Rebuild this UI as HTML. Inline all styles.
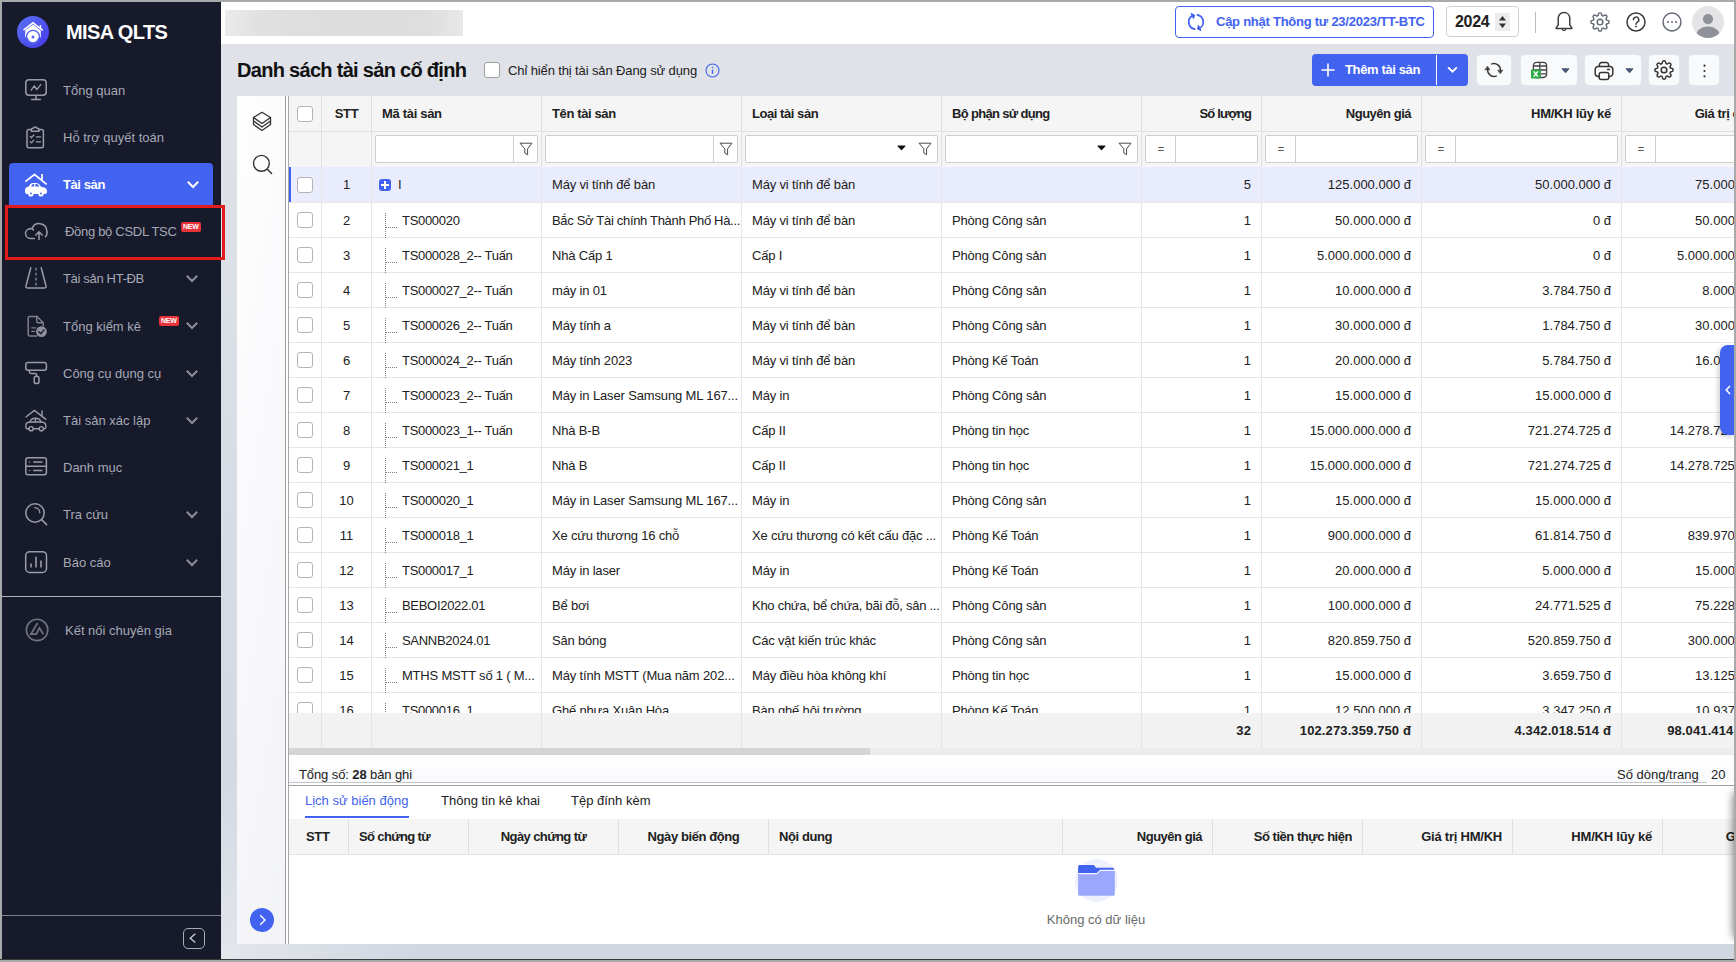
<!DOCTYPE html>
<html lang="vi"><head><meta charset="utf-8"><title>MISA QLTS - Danh sách tài sản cố định</title>
<style>
*{box-sizing:border-box;margin:0;padding:0}
html,body{width:1736px;height:962px;overflow:hidden}
body{font-family:"Liberation Sans",sans-serif;font-size:13px;color:#212121;background:#a9a9a9;position:relative;line-height:1}
.a{position:absolute}
svg{display:block;overflow:visible}
#bg{left:2px;top:2px;width:1732px;height:957px;background:radial-gradient(circle at 225px 100%,#e3e6eb 0,rgba(227,230,235,0) 190px),linear-gradient(to bottom,#e0e2e8 0%,#dfe2e8 10%,#d0d7e1 100%)}
#bline{left:0;top:959px;width:1736px;height:1px;background:#3a3a3a}
/* sidebar */
#side{left:2px;top:2px;width:219px;height:957px;background:#161a2b;overflow:hidden}
#logo{left:17px;top:16px;width:32px;height:32px;border-radius:50%;background:linear-gradient(135deg,#5b74f5,#4338e8)}
#brand{left:66px;top:22px;font-size:20px;font-weight:700;color:#fff;letter-spacing:-.6px;white-space:nowrap}
.mi{left:0;width:219px;height:47px;color:#a6a9b6;font-size:13px;white-space:nowrap}
.mi .ic{position:absolute;left:22px;top:11px;width:24px;height:24px}
.mi .tx{position:absolute;left:61px;top:17px}
.mi .chev{position:absolute;left:184px;top:18px;width:12px;height:12px}
.mi.act{left:9px;width:204px;top:163px;height:42px;background:#4262f0;border-radius:4px 4px 0 0;color:#fff;font-weight:700}
.new{position:absolute;background:#e8333a;color:#fff;font-size:7px;font-weight:700;border-radius:2px;height:10px;line-height:10px;padding:0 2px;letter-spacing:-.2px}
#redbox{left:5px;top:205px;width:220px;height:55px;border:3px solid #e41b1b}
#sideline{left:2px;top:596px;width:219px;height:1px;background:#b2b4bc}
#sideline2{left:2px;top:915px;width:219px;height:1px;background:#7e808a}
#collapse{left:183px;top:927.500px;width:21.500px;height:21.500px;border:1.700px solid #a9abb3;border-radius:5px}
/* topbar */
#top{left:221px;top:2px;width:1513px;height:42px;background:#fff}
#blur{left:225px;top:10px;width:238px;height:26px;background:linear-gradient(90deg,#ebebeb 0,#e1e0e0 15%,#dcdcdc 55%,#dedede 85%,#e8e8e8 100%)}
#upd{left:1175px;top:6px;width:259px;height:32px;border:1px solid #4262f0;border-radius:4px;color:#4262f0;font-weight:700;white-space:nowrap}
#upd span{position:absolute;left:40px;top:8px;letter-spacing:-.25px}
#year{left:1446px;top:6px;width:73px;height:31px;border:1px solid #cfd0d4;border-radius:4px}
#year b{position:absolute;left:8px;top:7px;font-size:16px;letter-spacing:-.3px}
#year i{position:absolute;left:48px;top:6px;width:15px;height:18px;background:#ececec}
#vdiv{left:1535px;top:12px;width:1px;height:21px;background:#bdbdbd}
#avatar{left:1692px;top:6px;width:32px;height:32px;border-radius:50%;background:#e4e4e6;overflow:hidden}
/* page head */
#title{left:237px;top:60px;font-size:20px;font-weight:700;color:#111;white-space:nowrap;letter-spacing:-.7px}
#chk{left:484px;top:62px;width:16px;height:16px;border:1px solid #9e9e9e;border-radius:3px;background:#fff}
#chklbl{left:508px;top:64px;white-space:nowrap;color:#212121;letter-spacing:-.12px}
#btnadd{left:1312px;top:54px;width:156px;height:32px;background:#4262f0;border-radius:4px;color:#fff;font-weight:700;white-space:nowrap}
#btnadd .t{position:absolute;left:33px;top:9px;letter-spacing:-.37px}
#btnadd .d{position:absolute;left:124px;top:1px;width:1px;height:30px;background:#fff}
.tb{top:54px;height:32px;background:#f9fafc;border:1px solid #e3e6ed;border-radius:5px}
/* panel */
#panel{left:237px;top:96px;width:1497px;height:847.500px;background:#fff;overflow:hidden}
#lstrip{left:0;top:0;width:48px;height:848px;background:linear-gradient(100deg,#fdfdfe 10%,#f2f3f7 100%)}
#sp1{left:48px;top:0;width:1px;height:848px;background:#9e9e9e}
#sp2{left:51px;top:0;width:1px;height:848px;background:#a8a8a8}
#grid{left:52px;top:0;width:1445px;height:847px;overflow:hidden}
.hdr{position:absolute;left:0;top:0;width:1500px;height:36px;background:#f5f5f5;border-bottom:1px solid #e0e0e0;font-weight:700}
.flt{position:absolute;left:0;top:36px;width:1500px;height:36px;background:#f5f5f5}
.hc{position:absolute;top:0;height:100%;border-right:1px solid #e0e0e0;padding:11px 10px 0 10px;white-space:nowrap;letter-spacing:-.3px}
.hc.r{text-align:right;padding:11px 10px 0 0}
.hc.ctr{text-align:center;padding:11px 0 0 0}
.fi{position:absolute;top:3px;height:28px;background:#fff;border:1px solid #cecece;border-radius:2px}
.fi .sep{position:absolute;top:0;width:1px;height:26px;background:#cecece}
.fi .eq{position:absolute;left:0;top:0;width:30px;height:26px;line-height:27px;text-align:center;font-size:11px;color:#555}
.cb{display:block;width:16px;height:16px;border:1px solid #b4b4b4;border-radius:3px;background:#fff}
.rows{position:absolute;left:0;top:71px;width:1500px;height:546px;overflow:hidden}
.row{position:relative;height:35px;border-bottom:1px solid #e6e6e6;background:#fff}
.row.sel{background:#e9ecfd;height:36px}
.row.sel .c{top:1px;line-height:34px}
.row.sel:before{content:"";position:absolute;left:0;top:0;width:2px;height:35px;background:#4262f0;z-index:2}
.c{position:absolute;top:0;height:35px;border-right:1px solid #e6e6e6;line-height:36px;white-space:nowrap;overflow:hidden;padding:0 1px 0 10px}
.c.r{text-align:right;padding:0 10px 0 0}
.c0{left:0;width:33px;padding:9px 0 0 8px}
.c1{left:33px;width:50px;text-align:center;padding:0}
.c2{left:83px;width:170px;padding:0}
.c3{left:253px;width:200px}
.c4{left:453px;width:200px}
.c5{left:653px;width:200px}
.c6{left:853px;width:120px}
.c7{left:973px;width:160px}
.c8{left:1133px;width:200px}
.c9{left:1333px;width:160px}
.el{display:block;overflow:hidden;white-space:nowrap;letter-spacing:-.18px}
.plus{position:absolute;left:7px;top:11px;width:12px;height:12px;border-radius:3px;background:#4262f0}
.plus:before{content:"";position:absolute;left:2px;top:5.350px;width:8px;height:1.300px;background:#fff}
.plus:after{content:"";position:absolute;left:5.350px;top:2px;width:1.300px;height:8px;background:#fff}
.t1{position:absolute;left:26px;top:0}
.t2{position:absolute;left:30px;top:0;width:139px;overflow:hidden;letter-spacing:-.3px}
.tv{position:absolute;left:13px;top:10px;width:0;height:25px;border-left:1px dotted #7d7d7d}
.th{position:absolute;left:14px;top:24px;width:11px;height:0;border-top:1px dotted #7d7d7d}
.foot{position:absolute;left:0;top:617px;width:1500px;height:35px;background:#f2f2f2;font-weight:700;letter-spacing:.12px}
.foot .c{border-right:1px solid #e3e3e3;line-height:35px}
.sb{position:absolute;left:0;top:652px;width:1500px;height:7px;background:#ececec}
.sb i{position:absolute;left:0;top:0;width:581px;height:7px;background:#d5d5d5}
.pg{position:absolute;left:0;top:659px;width:1445px;height:27px;background:linear-gradient(#fff,#f8f9fc)}
#hs1{left:0;top:686px;width:1418px;height:1px;background:#c4c4c4}
#hs2{left:0;top:689px;width:1445px;height:1px;background:#9d9d9d}
.tab{position:absolute;top:698px;white-space:nowrap;font-size:13px}
.dh{position:absolute;left:0;top:723px;width:1500px;height:36px;background:#f5f5f5;border-bottom:1px solid #e4e4e4;font-weight:700}
#tabR{left:1720px;top:345px;width:16px;height:90px;background:#4262f0;border-radius:8px 0 0 8px;box-shadow:-2px 2px 5px rgba(0,0,0,.18)}
#rborder{left:1734px;top:0;width:2px;height:962px;background:#a9a9a9}
#rshadow{left:1735px;top:792px;width:12px;height:146px;border-radius:6px;box-shadow:0 0 9px 2px rgba(0,0,0,.5)}

</style></head>
<body>
<div class="a" id="bg"></div>
<div class="a" id="bline"></div>
<div class="a" id="side"></div>
<div class="a" id="logo"><svg width="32" height="32" viewBox="0 0 32 32"><path d="M6.5 14.2 16 6.8l9.8 7.6" fill="none" stroke="#fff" stroke-width="1.5"/><path d="M22.6 9.2h1.6v3.2l-1.6-1.2z" fill="#fff"/><path d="M8.2 14.4 16 8.6l7.8 5.8v6.8l-2 1.2a6 6 0 0 0-11.6 0l-2-1.2z" fill="#fff"/><circle cx="16" cy="21" r="5.2" fill="#fff"/><circle cx="16" cy="21" r="6.6" fill="none" stroke="#5261ee" stroke-width="1.3"/><path d="M16 19.2l1.8 1.8-1.8 1.8-1.8-1.8z" fill="#5160ee"/></svg></div>
<div class="a" id="brand">MISA QLTS</div>

<div class="a mi" style="left:2px;top:67px"><svg class="ic" viewBox="0 0 24 24" fill="none" stroke="#9a9ca7" stroke-width="1.5" stroke-linecap="round" stroke-linejoin="round"><rect x="1.8" y="1.8" width="20.4" height="15.4" rx="3.2"/><path d="M12 17.4v4M7.6 21.6h8.8"/><path d="M7.2 12.2l3.2-4.4 2.4 3.8 4-5" stroke-width="1.3"/></svg><span class="tx">Tổng quan</span></div>

<div class="a mi" style="left:2px;top:114px"><svg class="ic" viewBox="0 0 24 24" fill="none" stroke="#9a9ca7" stroke-width="1.500" stroke-linecap="round" stroke-linejoin="round"><path d="M7.400 4.400H5a2 2 0 0 0-2 2v14.400a2 2 0 0 0 2 2h12.400a2 2 0 0 0 2-2V6.400a2 2 0 0 0-2-2H15"/><path d="M7.400 6.200V4.600a1.400 1.400 0 0 1 1.400-1.400h.6a1.900 1.900 0 0 1 3.600 0h.6a1.400 1.400 0 0 1 1.400 1.400v1.600z"/><path d="M6.200 11.400l1.300 1.300 2.300-2.700M6.200 16.600l1.300 1.300 2.300-2.700M12.400 11.800h4.200M12.400 16.800h4.200" stroke-width="1.300"/></svg><span class="tx">Hỗ trợ quyết toán</span></div>

<div class="a mi act"><svg class="ic" style="left:15px;top:9px" viewBox="0 0 24 24" fill="none" stroke="#fff" stroke-width="1.700" stroke-linejoin="round"><path d="M1.300 9.700 10.500 2.500 22.700 12.400"/><path d="M18 2v6.600"/><path d="M1 18.200C1 16.200 2.400 15 4.600 14.800L5.800 12.800C6.800 11.200 8 10.900 10.400 10.900H11.400C14 10.900 15.400 11.800 16.600 14L17 14.800C20.400 15 23 16.400 23 19V20C23 21.200 22.200 22 21 22H19.600A2.600 2.600 0 0 1 14.400 22H9.500A2.600 2.600 0 0 1 4.300 22H3C1.800 22 1 21.200 1 20Z" fill="#fff" stroke="none"/><path d="M7 14.500 8 12.900C8.400 12.300 9 12.100 10.200 12.100V14.500ZM11.400 12.100C13.400 12.100 14.400 12.700 15.400 14.500H11.400Z" fill="#4262f0" stroke="none"/><circle cx="6.900" cy="21.500" r=".9" fill="#4262f0" stroke="none"/><circle cx="17" cy="21.500" r=".9" fill="#4262f0" stroke="none"/></svg><span class="tx" style="left:54px;top:15px;letter-spacing:-.4px">Tài sản</span><svg class="chev" style="left:178px;top:16px" viewBox="0 0 12 12" fill="none" stroke="#fff" stroke-width="2"><path d="M.8 2.800 6 8 11.200 2.800"/></svg></div>

<div class="a mi" style="left:2px;top:208px"><svg class="ic" viewBox="0 0 24 24" fill="none" stroke="#9a9ca7" stroke-width="1.500" stroke-linecap="round" stroke-linejoin="round"><path d="M10.400 19.400H6.400a4.900 4.900 0 0 1-.6-9.760 1 1 0 0 0 .5.100"/><path d="M8.200 9.400A7.600 7.600 0 0 1 22.800 11.400a7 7 0 0 1-1.400 6.400"/><path d="M5.800 9.640c1.500-.3 2.800.2 3.600 1.300"/><path d="M15 20.600v-7.400M11.800 16l3.200-3.200 3.200 3.200"/></svg><span class="tx" style="left:63px;letter-spacing:-.3px">Đồng bộ CSDL TSC</span><span class="new" style="left:179px;top:14px">NEW</span></div>

<div class="a mi" style="left:2px;top:255px"><svg class="ic" viewBox="0 0 24 24" fill="none" stroke="#9a9ca7" stroke-width="1.500" stroke-linecap="round" stroke-linejoin="round"><path d="M6.800 1.800 1.900 20.200a1.300 1.300 0 0 0 1.300 1.700h17.600a1.300 1.300 0 0 0 1.300-1.700L17.200 1.800"/><path d="M12 1.800v18" stroke-dasharray="2.600 2.400" stroke-linecap="butt" stroke-width="1.200"/></svg><span class="tx" style="letter-spacing:-.33px">Tài sản HT-ĐB</span><svg class="chev" viewBox="0 0 12 12" fill="none" stroke="#8b8d98" stroke-width="2"><path d="M.8 2.800 6 8 11.200 2.800"/></svg></div>

<div class="a mi" style="left:2px;top:303px"><svg class="ic" viewBox="0 0 24 24" fill="none" stroke="#7f818c" stroke-width="1.500" stroke-linecap="round" stroke-linejoin="round"><path d="M12.600 22H5.600a1.400 1.400 0 0 1-1.400-1.400V3.800A1.400 1.400 0 0 1 5.600 2.400h7.400l6.200 6.400v3"/><path d="M12.800 2.600v4.800a1.400 1.400 0 0 0 1.400 1.400h4.800"/><path d="M7.800 13.800h4M7.800 17.400h2.800" stroke-width="1.300"/><circle cx="17.400" cy="17.600" r="5.400" fill="#8e909b" stroke="none"/><path d="M14.800 17.800l1.900 1.900 3.400-3.800" stroke="#161a2b" stroke-width="1.400"/></svg><span class="tx">Tổng kiểm kê</span><span class="new" style="left:157px;top:13px">NEW</span><svg class="chev" style="top:17px" viewBox="0 0 12 12" fill="none" stroke="#8b8d98" stroke-width="2"><path d="M.8 2.800 6 8 11.200 2.800"/></svg></div>

<div class="a mi" style="left:2px;top:350px"><svg class="ic" viewBox="0 0 24 24" fill="none" stroke="#9a9ca7" stroke-width="1.500" stroke-linecap="round" stroke-linejoin="round"><rect x="1.800" y="1.600" width="20.600" height="7.600" rx="2.200"/><path d="M5.400 9.400v1.600a1.400 1.400 0 0 0 1.400 1.400h4.400a1.400 1.400 0 0 1 1.400 1.400v1.400"/><rect x="10.200" y="15.200" width="4.800" height="7.400" rx="2.200"/></svg><span class="tx">Công cụ dụng cụ</span><svg class="chev" viewBox="0 0 12 12" fill="none" stroke="#8b8d98" stroke-width="2"><path d="M.8 2.800 6 8 11.200 2.800"/></svg></div>

<div class="a mi" style="left:2px;top:397px"><svg class="ic" viewBox="0 0 24 24" fill="none" stroke="#9a9ca7" stroke-width="1.400" stroke-linecap="round" stroke-linejoin="round"><path d="M1.600 9.200 10.400 2.400 22.200 11.600" stroke-linecap="butt"/><path d="M18 2.400v5.800" stroke-linecap="butt"/><path d="M5.900 14c.8-2.600 2.600-3.800 5.500-3.800s4.800 1.200 5.900 3.800c2.700.2 4.500 1.300 4.500 3.600v2c0 .7-.4 1.100-1.100 1.100h-1.100M5.900 14c-2.300.2-4 1.200-4 3.200v2.400c0 .7.400 1.100 1.100 1.100h1.800M9.400 20.700h5.600"/><path d="M5.900 14h11.400M11.400 10.400V14"/><circle cx="7.100" cy="20.700" r="2.100"/><circle cx="17.300" cy="20.700" r="2.100"/></svg><span class="tx">Tài sản xác lập</span><svg class="chev" viewBox="0 0 12 12" fill="none" stroke="#8b8d98" stroke-width="2"><path d="M.8 2.800 6 8 11.200 2.800"/></svg></div>

<div class="a mi" style="left:2px;top:444px"><svg class="ic" viewBox="0 0 24 24" fill="none" stroke="#9a9ca7" stroke-width="1.500" stroke-linecap="round" stroke-linejoin="round"><rect x="1.800" y="2.800" width="20.600" height="17" rx="2.200"/><path d="M1.800 11.300h20.600"/><path d="M9.200 7.100h9.200M9.200 15.500h9.200M5.600 6.600v1M5.600 15v1" stroke-linecap="butt"/></svg><span class="tx">Danh mục</span></div>

<div class="a mi" style="left:2px;top:491px"><svg class="ic" viewBox="0 0 24 24" fill="none" stroke="#9a9ca7" stroke-width="1.500" stroke-linecap="round" stroke-linejoin="round"><circle cx="11" cy="11" r="9.200"/><path d="M17.600 17.600l5 5"/><path d="M10.800 5.600a5.400 5.400 0 0 1 5 5.200" stroke-width="1.300"/></svg><span class="tx">Tra cứu</span><svg class="chev" viewBox="0 0 12 12" fill="none" stroke="#8b8d98" stroke-width="2"><path d="M.8 2.800 6 8 11.200 2.800"/></svg></div>

<div class="a mi" style="left:2px;top:539px"><svg class="ic" viewBox="0 0 24 24" fill="none" stroke="#9a9ca7" stroke-width="1.500" stroke-linecap="round" stroke-linejoin="round"><rect x="1.700" y="1.700" width="20.800" height="20.800" rx="4"/><path d="M7 13.600v4M12 6.800v10.800M17 10.400v7.200" stroke-linecap="butt" stroke-width="1.600"/></svg><span class="tx">Báo cáo</span><svg class="chev" viewBox="0 0 12 12" fill="none" stroke="#8b8d98" stroke-width="2"><path d="M.8 2.800 6 8 11.200 2.800"/></svg></div>

<div class="a" id="sideline"></div>
<div class="a mi" style="left:2px;top:607px"><svg class="ic" style="left:23px" viewBox="0 0 24 24" fill="none" stroke="#71737f" stroke-width="1.600" stroke-linejoin="miter"><circle cx="12.100" cy="11.900" r="10.700"/><path d="M12.600 5 5.900 16.100H11.300L14.500 9.900 18.300 16.200" stroke-width="1.700"/></svg><span class="tx" style="left:63px">Kết nối chuyên gia</span></div>

<div class="a" id="sideline2"></div>
<div class="a" id="collapse"><svg width="18" height="18" viewBox="0 0 18 18" fill="none" stroke="#d0d1d6" stroke-width="1.300"><path d="M11.300 4.800 6.200 9.200l5.100 4.400"/></svg></div>
<div class="a" id="redbox"></div>
<div class="a" id="top"></div>
<div class="a" id="blur"></div>
<div class="a" id="upd"><svg class="a" style="left:11px;top:6px" width="18" height="18" viewBox="0 0 18 18" fill="none" stroke="#4262f0" stroke-width="1.700" stroke-linecap="round" stroke-linejoin="round"><path d="M7.730 16.190A7.300 7.300 0 0 1 5.400 2.700"/><path d="M10.270 1.810A7.300 7.300 0 0 1 12.600 15.300"/><path d="M4.400.600 7.600 2.100 6.600 5.400z" fill="#4262f0" stroke-width="1"/><path d="M11.400 12.600 10.400 15.900 13.600 17.400z" fill="#4262f0" stroke-width="1"/></svg><span>Cập nhật Thông tư 23/2023/TT-BTC</span></div>
<div class="a" id="year"><b>2024</b><i></i><svg class="a" style="left:51px;top:8px" width="9" height="14" viewBox="0 0 9 14"><path d="M4.500 1 8 5.400H1zM4.500 13 8 8.600H1z" fill="#333"/></svg></div>
<div class="a" id="vdiv"></div>
<svg class="a" style="left:1554px;top:11px" width="20" height="22" viewBox="0 0 20 22" fill="none" stroke="#3c3c3c" stroke-width="1.500" stroke-linecap="round" stroke-linejoin="round"><path d="M10 1.600c3.400 0 5.800 2.600 5.800 6v6.200l2 3v.8H2.200v-.8l2-3V7.600c0-3.400 2.400-6 5.800-6z"/><path d="M8.400 18.400a1.700 1.700 0 0 0 3.200 0" stroke-width="1.300"/></svg>
<svg class="a" style="left:1590px;top:12px" width="20" height="20" viewBox="0 0 24 24" fill="none" stroke="#606774" stroke-width="1.700" stroke-linecap="round" stroke-linejoin="round"><circle cx="12" cy="12" r="3.400"/><path d="M19.400 15a1.650 1.650 0 0 0 .33 1.820l.06.060a2 2 0 1 1-2.830 2.830l-.06-.060a1.650 1.650 0 0 0-1.820-.33 1.650 1.650 0 0 0-1 1.510V21a2 2 0 0 1-4 0v-.09A1.650 1.650 0 0 0 9 19.400a1.650 1.650 0 0 0-1.820.33l-.06.060a2 2 0 1 1-2.830-2.830l.06-.060a1.650 1.650 0 0 0 .33-1.820 1.650 1.650 0 0 0-1.510-1H3a2 2 0 0 1 0-4h.09A1.650 1.650 0 0 0 4.600 9a1.650 1.650 0 0 0-.33-1.820l-.06-.060a2 2 0 1 1 2.830-2.830l.06.060a1.650 1.650 0 0 0 1.820.33H9a1.650 1.650 0 0 0 1-1.510V3a2 2 0 0 1 4 0v.09a1.650 1.650 0 0 0 1 1.510 1.650 1.650 0 0 0 1.820-.33l.06-.060a2 2 0 1 1 2.830 2.830l-.06.060a1.650 1.650 0 0 0-.33 1.820V9a1.650 1.650 0 0 0 1.510 1H21a2 2 0 0 1 0 4h-.09a1.650 1.650 0 0 0-1.510 1z"/></svg>
<svg class="a" style="left:1626px;top:12px" width="20" height="20" viewBox="0 0 20 20" fill="none" stroke="#3c3c3c" stroke-width="1.500" stroke-linecap="round" stroke-linejoin="round"><circle cx="10" cy="10" r="9"/><path d="M7.400 7.800a2.700 2.700 0 1 1 4 2.400c-.9.500-1.400 1-1.400 2"/><circle cx="10" cy="14.600" r=".7" fill="#3c3c3c" stroke-width=".6"/></svg>
<svg class="a" style="left:1662px;top:12px" width="20" height="20" viewBox="0 0 20 20" fill="none" stroke="#606774" stroke-width="1.400"><circle cx="10" cy="10" r="9"/><g fill="#606774" stroke="none"><circle cx="6" cy="10" r="1"/><circle cx="10" cy="10" r="1"/><circle cx="14" cy="10" r="1"/></g></svg>
<div class="a" id="avatar"><svg width="32" height="32" viewBox="0 0 32 32"><circle cx="16" cy="13.100" r="5.100" fill="#8f9199"/><ellipse cx="16" cy="28.600" rx="11.400" ry="8" fill="#8f9199"/></svg></div>

<div class="a" id="title">Danh sách tài sản cố định</div>
<div class="a" id="chk"></div>
<div class="a" id="chklbl">Chỉ hiển thị tài sản Đang sử dụng</div>
<svg class="a" style="left:705px;top:63px" width="15" height="15" viewBox="0 0 15 15" fill="none" stroke="#4262f0" stroke-width="1.100"><circle cx="7.500" cy="7.500" r="6.500"/><path d="M7.500 6.600v4.200" stroke-width="1.300"/><circle cx="7.500" cy="4.500" r=".8" fill="#4262f0" stroke="none"/></svg>

<div class="a" id="btnadd"><svg class="a" style="left:9px;top:9px" width="14" height="14" viewBox="0 0 14 14" stroke="#fff" stroke-width="1.600"><path d="M7 .4v13.200M.4 7h13.200"/></svg><span class="t">Thêm tài sản</span><span class="d"></span><svg class="a" style="left:135px;top:12px" width="11" height="8" viewBox="0 0 11 8" fill="none" stroke="#fff" stroke-width="2"><path d="M1.200 1.400 5.500 5.600 9.800 1.400"/></svg></div>

<div class="a tb" style="left:1476px;width:36px"><svg class="a" style="left:7px;top:5px" width="20" height="20" viewBox="0 0 20 20" fill="none" stroke="#3a3a3a" stroke-width="1.500" stroke-linecap="round"><path d="M7.780 3.890A6.500 6.500 0 0 1 16.400 10.600"/><path d="M3.600 9.400A6.500 6.500 0 0 0 12.220 16.110"/><path d="M14 10.200h4.800l-2.400 3.400z" fill="#3a3a3a" stroke-width=".6" stroke-linejoin="round"/><path d="M1.200 9.800H6L3.600 6.400z" fill="#3a3a3a" stroke-width=".6" stroke-linejoin="round"/></svg></div>
<div class="a tb" style="left:1520px;width:58px"><svg class="a" style="left:9px;top:6px" width="18" height="18" viewBox="0 0 18 18" fill="none" stroke="#444" stroke-width="1.300"><rect x="3.400" y="1.300" width="13.200" height="15.200" rx="3.400"/><path d="M3.400 5h13.200M3.400 9h13.200M3.400 12.800h13.200M9.800 1.300v15.200"/><rect x="1" y="8.600" width="9.600" height="8.800" rx=".6" fill="#2caa45" stroke="none"/><path d="M3.700 10.400l4.200 5.200M7.900 10.400 3.700 15.600" stroke="#fff" stroke-width="1.500"/></svg><svg class="a" style="left:40px;top:13px" width="9" height="6" viewBox="0 0 9 6"><path d="M1 .800h7L4.500 4.800z" fill="#4b5578" stroke="#4b5578" stroke-width="1" stroke-linejoin="round"/></svg></div>
<div class="a tb" style="left:1584px;width:58px"><svg class="a" style="left:9px;top:6px" width="20" height="20" viewBox="0 0 20 20" fill="none" stroke="#333" stroke-width="1.500" stroke-linejoin="round"><path d="M5.400 5.400V3.800a2.200 2.200 0 0 1 2.200-2.200h4.800a2.200 2.200 0 0 1 2.200 2.200v1.600"/><path d="M5.200 15.400H4A2.800 2.800 0 0 1 1.200 12.600V8.200A2.800 2.800 0 0 1 4 5.400h12a2.800 2.800 0 0 1 2.800 2.800v4.400a2.800 2.800 0 0 1-2.800 2.800h-1.200"/><rect x="5.200" y="11.400" width="9.600" height="7.200" rx="2"/><path d="M13.600 8.600h1.800" stroke-linecap="round"/></svg><svg class="a" style="left:40px;top:13px" width="9" height="6" viewBox="0 0 9 6"><path d="M1 .800h7L4.500 4.800z" fill="#4b5578" stroke="#4b5578" stroke-width="1" stroke-linejoin="round"/></svg></div>
<div class="a tb" style="left:1648px;width:32px"><svg class="a" style="left:5px;top:5px" width="20" height="20" viewBox="0 0 24 24" fill="none" stroke="#333" stroke-width="1.800" stroke-linecap="round" stroke-linejoin="round"><circle cx="12" cy="12" r="3.400"/><path d="M19.400 15a1.650 1.650 0 0 0 .33 1.820l.06.060a2 2 0 1 1-2.830 2.830l-.06-.060a1.650 1.650 0 0 0-1.820-.33 1.650 1.650 0 0 0-1 1.510V21a2 2 0 0 1-4 0v-.09A1.650 1.650 0 0 0 9 19.400a1.650 1.650 0 0 0-1.820.33l-.06.060a2 2 0 1 1-2.830-2.830l.06-.060a1.650 1.650 0 0 0 .33-1.820 1.650 1.650 0 0 0-1.510-1H3a2 2 0 0 1 0-4h.09A1.650 1.650 0 0 0 4.600 9a1.650 1.650 0 0 0-.33-1.820l-.06-.060a2 2 0 1 1 2.830-2.830l.06.060a1.650 1.650 0 0 0 1.820.33H9a1.650 1.650 0 0 0 1-1.510V3a2 2 0 0 1 4 0v.09a1.650 1.650 0 0 0 1 1.510 1.650 1.650 0 0 0 1.820-.33l.06-.060a2 2 0 1 1 2.830 2.830l-.06.060a1.650 1.650 0 0 0-.33 1.820V9a1.650 1.650 0 0 0 1.510 1H21a2 2 0 0 1 0 4h-.09a1.650 1.650 0 0 0-1.510 1z"/></svg></div>
<div class="a tb" style="left:1688px;width:32px"><svg class="a" style="left:14px;top:9px" width="3" height="14" viewBox="0 0 3 14" fill="#333"><circle cx="1.500" cy="1.700" r="1.100"/><circle cx="1.500" cy="7" r="1.100"/><circle cx="1.500" cy="12.300" r="1.100"/></svg></div>
<div class="a" id="panel">
<div class="a" id="lstrip"></div>
<svg class="a" style="left:15px;top:15px" width="20" height="21" viewBox="0 0 20 21" fill="none" stroke="#333" stroke-width="1.300" stroke-linejoin="round" stroke-linecap="round"><path d="M10 1.300 18.500 6.500 10 12.500 1.500 6.500z"/><path d="M1.500 6.500V10L10 16 18.500 10V6.500"/><path d="M1.500 10V13.500L10 19.500 18.500 13.500V10"/></svg>
<svg class="a" style="left:15px;top:58px" width="21" height="21" viewBox="0 0 21 21" fill="none" stroke="#333" stroke-width="1.400" stroke-linecap="round"><circle cx="9.400" cy="9.300" r="7.900"/><path d="M15.300 15.300 19.600 19.600"/></svg>
<div class="a" id="sp1"></div><div class="a" id="sp2"></div>
<div class="a" style="left:13px;top:812px;width:24px;height:24px;border-radius:50%;background:#4262f0"><svg class="a" style="left:8px;top:6px" width="9" height="12" viewBox="0 0 9 12" fill="none" stroke="#fff" stroke-width="1.400"><path d="M2.200 1.200 7 6 2.200 10.800"/></svg></div>
<div class="a" id="grid">
<div class="hdr">
<div class="hc" style="left:0;width:33px;padding:10px 0 0 8px"><span class="cb"></span></div>
<div class="hc ctr" style="left:33px;width:50px;letter-spacing:-0.39px">STT</div>
<div class="hc" style="left:83px;width:170px;letter-spacing:-0.31px">Mã tài sản</div>
<div class="hc" style="left:253px;width:200px;letter-spacing:-0.375px">Tên tài sản</div>
<div class="hc" style="left:453px;width:200px;letter-spacing:-0.444px">Loại tài sản</div>
<div class="hc" style="left:653px;width:200px;letter-spacing:-0.668px">Bộ phận sử dụng</div>
<div class="hc r" style="left:853px;width:120px;letter-spacing:-0.859px">Số lượng</div>
<div class="hc r" style="left:973px;width:160px;letter-spacing:-0.488px">Nguyên giá</div>
<div class="hc r" style="left:1133px;width:200px;letter-spacing:-0.257px">HM/KH lũy kế</div>
<div class="hc r" style="left:1333px;width:160px;letter-spacing:-0.4px">Giá trị còn lại</div>
</div>
<div class="flt">
<div class="hc" style="left:0;width:33px"></div>
<div class="hc" style="left:33px;width:50px"></div>
<div class="hc" style="left:83px;width:170px"></div>
<div class="hc" style="left:253px;width:200px"></div>
<div class="hc" style="left:453px;width:200px"></div>
<div class="hc" style="left:653px;width:200px"></div>
<div class="hc" style="left:853px;width:120px"></div>
<div class="hc" style="left:973px;width:160px"></div>
<div class="hc" style="left:1133px;width:200px"></div>
<div class="hc" style="left:1333px;width:160px"></div>
<div class="fi" style="left:86px;width:163px"><span class="sep" style="left:137px"></span><svg class="a" style="left:143px;top:6px" width="14" height="14" viewBox="0 0 14 14" fill="none" stroke="#4a4a4a" stroke-width="1" stroke-linejoin="round"><path d="M1 1.200h12L8.600 6.800v6L5.800 11V6.800z"/></svg></div>
<div class="fi" style="left:256px;width:193px"><span class="sep" style="left:167px"></span><svg class="a" style="left:173px;top:6px" width="14" height="14" viewBox="0 0 14 14" fill="none" stroke="#4a4a4a" stroke-width="1" stroke-linejoin="round"><path d="M1 1.200h12L8.600 6.800v6L5.800 11V6.800z"/></svg></div>
<div class="fi" style="left:456px;width:193px"><svg class="a" style="left:151px;top:9px" width="9" height="6" viewBox="0 0 9 6"><path d="M1.200 1h6.600L4.500 4.600z" fill="#111" stroke="#111" stroke-width="1.200" stroke-linejoin="round"/></svg><svg class="a" style="left:171.500px;top:6px" width="14" height="14" viewBox="0 0 14 14" fill="none" stroke="#4a4a4a" stroke-width="1" stroke-linejoin="round"><path d="M1 1.200h12L8.600 6.800v6L5.800 11V6.800z"/></svg></div>
<div class="fi" style="left:656px;width:193px"><svg class="a" style="left:151px;top:9px" width="9" height="6" viewBox="0 0 9 6"><path d="M1.200 1h6.600L4.500 4.600z" fill="#111" stroke="#111" stroke-width="1.200" stroke-linejoin="round"/></svg><svg class="a" style="left:171.500px;top:6px" width="14" height="14" viewBox="0 0 14 14" fill="none" stroke="#4a4a4a" stroke-width="1" stroke-linejoin="round"><path d="M1 1.200h12L8.600 6.800v6L5.800 11V6.800z"/></svg></div>
<div class="fi" style="left:856px;width:113px"><span class="eq">=</span><span class="sep" style="left:29px"></span></div>
<div class="fi" style="left:976px;width:153px"><span class="eq">=</span><span class="sep" style="left:29px"></span></div>
<div class="fi" style="left:1136px;width:193px"><span class="eq">=</span><span class="sep" style="left:29px"></span></div>
<div class="fi" style="left:1336px;width:153px"><span class="eq">=</span><span class="sep" style="left:29px"></span></div>
</div>
<div class="rows">
<div class="row sel"><div class="c c0"><span class="cb"></span></div><div class="c c1">1</div><div class="c c2"><span class="plus"></span><span class="t1">I</span></div><div class="c c3"><span class="el">Máy vi tính để bàn</span></div><div class="c c4"><span class="el">Máy vi tính để bàn</span></div><div class="c c5"><span class="el"></span></div><div class="c c6 r">5</div><div class="c c7 r">125.000.000 đ</div><div class="c c8 r">50.000.000 đ</div><div class="c c9 r">75.000.000 đ</div></div>
<div class="row"><div class="c c0"><span class="cb"></span></div><div class="c c1">2</div><div class="c c2"><span class="tv"></span><span class="th"></span><span class="t2">TS000020</span></div><div class="c c3"><span class="el" style="letter-spacing:-0.316px">Bắc Sở Tài chính Thành Phố Hà...</span></div><div class="c c4"><span class="el">Máy vi tính để bàn</span></div><div class="c c5"><span class="el">Phòng Công sản</span></div><div class="c c6 r">1</div><div class="c c7 r">50.000.000 đ</div><div class="c c8 r">0 đ</div><div class="c c9 r">50.000.000 đ</div></div>
<div class="row"><div class="c c0"><span class="cb"></span></div><div class="c c1">3</div><div class="c c2"><span class="tv"></span><span class="th"></span><span class="t2">TS000028_2-- Tuấn</span></div><div class="c c3"><span class="el">Nhà Cấp 1</span></div><div class="c c4"><span class="el">Cấp I</span></div><div class="c c5"><span class="el">Phòng Công sản</span></div><div class="c c6 r">1</div><div class="c c7 r">5.000.000.000 đ</div><div class="c c8 r">0 đ</div><div class="c c9 r">5.000.000.000 đ</div></div>
<div class="row"><div class="c c0"><span class="cb"></span></div><div class="c c1">4</div><div class="c c2"><span class="tv"></span><span class="th"></span><span class="t2">TS000027_2-- Tuấn</span></div><div class="c c3"><span class="el">máy in 01</span></div><div class="c c4"><span class="el">Máy vi tính để bàn</span></div><div class="c c5"><span class="el">Phòng Công sản</span></div><div class="c c6 r">1</div><div class="c c7 r">10.000.000 đ</div><div class="c c8 r">3.784.750 đ</div><div class="c c9 r">8.000.000 đ</div></div>
<div class="row"><div class="c c0"><span class="cb"></span></div><div class="c c1">5</div><div class="c c2"><span class="tv"></span><span class="th"></span><span class="t2">TS000026_2-- Tuấn</span></div><div class="c c3"><span class="el">Máy tính a</span></div><div class="c c4"><span class="el">Máy vi tính để bàn</span></div><div class="c c5"><span class="el">Phòng Công sản</span></div><div class="c c6 r">1</div><div class="c c7 r">30.000.000 đ</div><div class="c c8 r">1.784.750 đ</div><div class="c c9 r">30.000.000 đ</div></div>
<div class="row"><div class="c c0"><span class="cb"></span></div><div class="c c1">6</div><div class="c c2"><span class="tv"></span><span class="th"></span><span class="t2">TS000024_2-- Tuấn</span></div><div class="c c3"><span class="el">Máy tính 2023</span></div><div class="c c4"><span class="el">Máy vi tính để bàn</span></div><div class="c c5"><span class="el">Phòng Kế Toán</span></div><div class="c c6 r">1</div><div class="c c7 r">20.000.000 đ</div><div class="c c8 r">5.784.750 đ</div><div class="c c9 r">16.000.000 đ</div></div>
<div class="row"><div class="c c0"><span class="cb"></span></div><div class="c c1">7</div><div class="c c2"><span class="tv"></span><span class="th"></span><span class="t2">TS000023_2-- Tuấn</span></div><div class="c c3"><span class="el" style="letter-spacing:-0.143px">Máy in Laser Samsung ML 167...</span></div><div class="c c4"><span class="el">Máy in</span></div><div class="c c5"><span class="el">Phòng Công sản</span></div><div class="c c6 r">1</div><div class="c c7 r">15.000.000 đ</div><div class="c c8 r">15.000.000 đ</div><div class="c c9 r"></div></div>
<div class="row"><div class="c c0"><span class="cb"></span></div><div class="c c1">8</div><div class="c c2"><span class="tv"></span><span class="th"></span><span class="t2">TS000023_1-- Tuấn</span></div><div class="c c3"><span class="el">Nhà B-B</span></div><div class="c c4"><span class="el">Cấp II</span></div><div class="c c5"><span class="el">Phòng tin học</span></div><div class="c c6 r">1</div><div class="c c7 r">15.000.000.000 đ</div><div class="c c8 r">721.274.725 đ</div><div class="c c9 r">14.278.725.275 đ</div></div>
<div class="row"><div class="c c0"><span class="cb"></span></div><div class="c c1">9</div><div class="c c2"><span class="tv"></span><span class="th"></span><span class="t2">TS000021_1</span></div><div class="c c3"><span class="el">Nhà B</span></div><div class="c c4"><span class="el">Cấp II</span></div><div class="c c5"><span class="el">Phòng tin học</span></div><div class="c c6 r">1</div><div class="c c7 r">15.000.000.000 đ</div><div class="c c8 r">721.274.725 đ</div><div class="c c9 r">14.278.725.275 đ</div></div>
<div class="row"><div class="c c0"><span class="cb"></span></div><div class="c c1">10</div><div class="c c2"><span class="tv"></span><span class="th"></span><span class="t2">TS000020_1</span></div><div class="c c3"><span class="el" style="letter-spacing:-0.143px">Máy in Laser Samsung ML 167...</span></div><div class="c c4"><span class="el">Máy in</span></div><div class="c c5"><span class="el">Phòng Công sản</span></div><div class="c c6 r">1</div><div class="c c7 r">15.000.000 đ</div><div class="c c8 r">15.000.000 đ</div><div class="c c9 r"></div></div>
<div class="row"><div class="c c0"><span class="cb"></span></div><div class="c c1">11</div><div class="c c2"><span class="tv"></span><span class="th"></span><span class="t2">TS000018_1</span></div><div class="c c3"><span class="el">Xe cứu thương 16 chỗ</span></div><div class="c c4"><span class="el" style="letter-spacing:-0.187px">Xe cứu thương có kết cấu đặc ...</span></div><div class="c c5"><span class="el">Phòng Kế Toán</span></div><div class="c c6 r">1</div><div class="c c7 r">900.000.000 đ</div><div class="c c8 r">61.814.750 đ</div><div class="c c9 r">839.970.000 đ</div></div>
<div class="row"><div class="c c0"><span class="cb"></span></div><div class="c c1">12</div><div class="c c2"><span class="tv"></span><span class="th"></span><span class="t2">TS000017_1</span></div><div class="c c3"><span class="el">Máy in laser</span></div><div class="c c4"><span class="el">Máy in</span></div><div class="c c5"><span class="el">Phòng Kế Toán</span></div><div class="c c6 r">1</div><div class="c c7 r">20.000.000 đ</div><div class="c c8 r">5.000.000 đ</div><div class="c c9 r">15.000.000 đ</div></div>
<div class="row"><div class="c c0"><span class="cb"></span></div><div class="c c1">13</div><div class="c c2"><span class="tv"></span><span class="th"></span><span class="t2">BEBOI2022.01</span></div><div class="c c3"><span class="el">Bể bơi</span></div><div class="c c4"><span class="el" style="letter-spacing:-0.269px">Kho chứa, bể chứa, bãi đỗ, sân ...</span></div><div class="c c5"><span class="el">Phòng Công sản</span></div><div class="c c6 r">1</div><div class="c c7 r">100.000.000 đ</div><div class="c c8 r">24.771.525 đ</div><div class="c c9 r">75.228.475 đ</div></div>
<div class="row"><div class="c c0"><span class="cb"></span></div><div class="c c1">14</div><div class="c c2"><span class="tv"></span><span class="th"></span><span class="t2">SANNB2024.01</span></div><div class="c c3"><span class="el">Sân bóng</span></div><div class="c c4"><span class="el">Các vật kiến trúc khác</span></div><div class="c c5"><span class="el">Phòng Công sản</span></div><div class="c c6 r">1</div><div class="c c7 r">820.859.750 đ</div><div class="c c8 r">520.859.750 đ</div><div class="c c9 r">300.000.000 đ</div></div>
<div class="row"><div class="c c0"><span class="cb"></span></div><div class="c c1">15</div><div class="c c2"><span class="tv"></span><span class="th"></span><span class="t2" style="letter-spacing:-0.21px">MTHS MSTT số 1 ( M...</span></div><div class="c c3"><span class="el" style="letter-spacing:-0.145px">Máy tính MSTT (Mua năm 202...</span></div><div class="c c4"><span class="el">Máy điều hòa không khí</span></div><div class="c c5"><span class="el">Phòng tin học</span></div><div class="c c6 r">1</div><div class="c c7 r">15.000.000 đ</div><div class="c c8 r">3.659.750 đ</div><div class="c c9 r">13.125.000 đ</div></div>
<div class="row"><div class="c c0"><span class="cb"></span></div><div class="c c1">16</div><div class="c c2"><span class="tv"></span><span class="th"></span><span class="t2">TS000016_1</span></div><div class="c c3"><span class="el">Ghế nhựa Xuân Hòa</span></div><div class="c c4"><span class="el">Bàn ghế hội trường</span></div><div class="c c5"><span class="el">Phòng Kế Toán</span></div><div class="c c6 r">1</div><div class="c c7 r">12.500.000 đ</div><div class="c c8 r">3.347.250 đ</div><div class="c c9 r">10.937.500 đ</div></div>
</div>
<div class="foot">
<div class="c c0"></div><div class="c c1"></div><div class="c c2"></div><div class="c c3"></div><div class="c c4"></div><div class="c c5"></div>
<div class="c c6 r">32</div><div class="c c7 r">102.273.359.750 đ</div><div class="c c8 r">4.342.018.514 đ</div><div class="c c9 r">98.041.414.236 đ</div>
</div>
<div class="sb"><i></i></div>
<div class="pg"><span class="a" style="left:10px;top:13px;white-space:nowrap;letter-spacing:-.1px">Tổng số: <b>28</b> bản ghi</span><span class="a" style="left:1328px;top:13px;white-space:nowrap">Số dòng/trang</span><span class="a" style="left:1422px;top:13px">20</span></div>
<div class="a" id="hs1"></div><div class="a" id="hs2"></div>
<div class="tab" style="left:16px;color:#4262f0">Lịch sử biến động</div>
<div class="tab" style="left:152px">Thông tin kê khai</div>
<div class="tab" style="left:282px">Tệp đính kèm</div>
<div class="a" style="left:16px;top:720px;width:104px;height:2px;background:#4262f0"></div>
<div class="dh">
<div class="hc" style="left:0;width:60px;padding-left:17px;letter-spacing:-0.3px">STT</div>
<div class="hc" style="left:60px;width:120px;letter-spacing:-0.64px">Số chứng từ</div>
<div class="hc ctr" style="left:180px;width:150px;letter-spacing:-0.595px">Ngày chứng từ</div>
<div class="hc ctr" style="left:330px;width:150px;letter-spacing:-0.41px">Ngày biến động</div>
<div class="hc" style="left:480px;width:294px;letter-spacing:-0.4px">Nội dung</div>
<div class="hc r" style="left:774px;width:150px;letter-spacing:-0.488px">Nguyên giá</div>
<div class="hc r" style="left:924px;width:150px;letter-spacing:-0.47px">Số tiền thực hiện</div>
<div class="hc r" style="left:1074px;width:150px;letter-spacing:-0.23px">Giá trị HM/KH</div>
<div class="hc r" style="left:1224px;width:150px;letter-spacing:-0.2px">HM/KH lũy kế</div>
<div class="hc r" style="left:1374px;width:150px;letter-spacing:-0.4px">Giá trị còn lại</div>
</div>
<div class="a" style="left:786px;top:763px;width:43px;height:43px;border-radius:50%;background:#eef0fd"></div>
<svg class="a" style="left:787px;top:766px" width="42" height="36" viewBox="0 0 42 36"><path d="M2.100 4.500a1.500 1.500 0 0 1 1.500-1.500H17.400a1.200 1.200 0 0 1 1 .5L19.900 5.800H36.600a1.500 1.500 0 0 1 1.500 1.500V14H2.100z" fill="#4262f0"/><path d="M2.100 11.900H20.800L24.500 8.600H37.300a1.500 1.500 0 0 1 1.500 1.500V32.300a1.500 1.500 0 0 1-1.500 1.500H3.600a1.500 1.500 0 0 1-1.500-1.500z" fill="#99a8fc"/><path d="M2.100 11.700H20.700L24.400 8.400H38.400" fill="none" stroke="#f3f5ff" stroke-width="1.200"/></svg>
<div class="a" style="left:707px;top:817px;width:200px;text-align:center;color:#6a6a6a;white-space:nowrap">Không có dữ liệu</div>
</div>
</div>
<div class="a" id="rshadow"></div>
<div class="a" id="tabR"><svg class="a" style="left:5px;top:40px" width="6" height="10" viewBox="0 0 6 10" fill="none" stroke="#fff" stroke-width="1.500"><path d="M5 1 1.200 5 5 9"/></svg></div>
<div class="a" id="rborder"></div>
</body></html>
